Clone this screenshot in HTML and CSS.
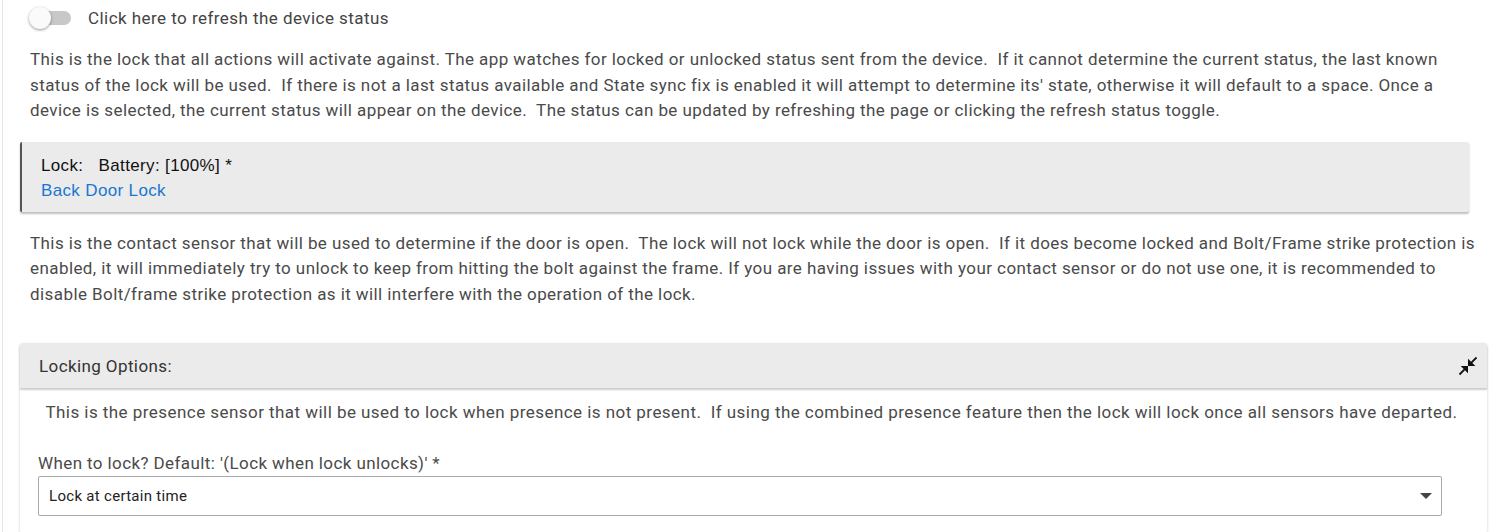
FILE: index.html
```html
<!DOCTYPE html>
<html lang="en">
<head>
    <meta charset="UTF-8">
    <title>Lock Settings</title>
    <link rel="stylesheet" href="styles.css">
</head>
<body>
    <div class="page">
        <!-- refresh toggle -->
        <label class="toggle-row">
            <span class="toggle"><span class="knob"></span></span>
            <span class="toggle-text">Click here to refresh the device status</span>
        </label>

        <p class="desc">This is the lock that all actions will activate against. The app watches for locked or unlocked status sent from the device.&nbsp; If it cannot determine the current status, the last known status of the lock will be used.&nbsp; If there is not a last status available and State sync fix is enabled it will attempt to determine its' state, otherwise it will default to a space. Once a device is selected, the current status will appear on the device.&nbsp; The status can be updated by refreshing the page or clicking the refresh status toggle.</p>

        <div class="device-box">
            <div class="device-label">Lock:&nbsp;&nbsp; Battery: [100%] *</div>
            <a class="device-link" href="#">Back Door Lock</a>
        </div>

        <p class="desc">This is the contact sensor that will be used to determine if the door is open.&nbsp; The lock will not lock while the door is open.&nbsp; If it does become locked and Bolt/Frame strike protection is enabled, it will immediately try to unlock to keep from hitting the bolt against the frame. If you are having issues with your contact sensor or do not use one, it is recommended to disable Bolt/frame strike protection as it will interfere with the operation of the lock.</p>

        <!-- Locking Options -->
        <div class="panel">
            <div class="panel-head">
                <span>Locking Options:</span>
                <svg class="collapse" width="22" height="22" viewBox="0 0 24 24">
                    <path d="M22 3.41L16.71 8.7 20 12h-8V4l3.29 3.29L20.59 2 22 3.41zM3.41 22l5.29-5.29L12 20v-8H4l3.29 3.29L2 20.59 3.41 22z" fill="#111"/>
                </svg>
            </div>
            <div class="panel-body">
                <p class="center-note">This is the presence sensor that will be used to lock when presence is not present.&nbsp; If using the combined presence feature then the lock will lock once all sensors have departed.</p>
                <div class="field-label">When to lock? Default: '(Lock when lock unlocks)' *</div>
                <div class="select">
                    <span>Lock at certain time</span>
                    <span class="caret"></span>
                </div>
            </div>
        </div>
    </div>
</body>
</html>
```

FILE: styles.css
```css
body {
    margin: 0;
    font-family: Roboto, "Liberation Sans", sans-serif;
    color: #4a4a4a;
    background: #fff;
}
.page {
    margin-left: 2px;
    border-left: 1px solid #e4e4e4;
    padding: 0 18px 20px 17px;
    min-height: 532px;
    box-sizing: border-box;
}
.toggle-row {
    display: flex;
    align-items: center;
    height: 36px;
    padding-left: 11px;
    cursor: pointer;
}
.toggle {
    position: relative;
    width: 40px;
    height: 14px;
    border-radius: 7px;
    background: #c8c8c8;
}
.knob {
    position: absolute;
    left: -2px;
    top: -4px;
    width: 22px;
    height: 22px;
    border-radius: 50%;
    background: #fafafa;
    box-shadow: 0 1px 3px rgba(0, 0, 0, 0.4);
}
.toggle-text {
    margin-left: 17px;
    font-size: 17px;
    letter-spacing: 0.45px;
    color: #444;
}
.desc {
    margin: 11px 0 0;
    padding: 0 0 0 10px;
    font-size: 17px;
    letter-spacing: 0.42px;
    line-height: 25.5px;
}
.device-box {
    margin: 18px 18px 0 0;
    background: #ebebeb;
    border-left: 2px solid #555;
    border-radius: 2px;
    box-shadow: 0 2px 2px rgba(0, 0, 0, 0.25);
    padding: 11px 19px 10px;
    font-family: "Liberation Sans", Arial, sans-serif;
    font-size: 17px;
    letter-spacing: 0.35px;
    line-height: 25px;
    height: 70px;
    box-sizing: border-box;
}
.device-label {
    color: #111;
}
.device-link {
    color: #1976d2;
    text-decoration: none;
}
.device-box + .desc {
    margin-top: 19px;
}
.panel {
    margin-top: 36px;
    border-radius: 3px;
    box-shadow: 0 1px 3px rgba(0, 0, 0, 0.2);
}
.panel-head {
    display: flex;
    align-items: center;
    justify-content: space-between;
    height: 45px;
    padding: 0 8px 0 19px;
    background: #ebebeb;
    border-radius: 3px 3px 0 0;
    box-shadow: 0 2px 2px rgba(0, 0, 0, 0.2);
    font-size: 17px;
    letter-spacing: 0.4px;
    color: #333;
    position: relative;
}
.panel-body {
    padding: 13px 45px 17px 18px;
}
.center-note {
    margin: 0 -23px 0 0;
    text-align: center;
    font-size: 17px;
    letter-spacing: 0.45px;
    line-height: 22px;
}
.field-label {
    margin-top: 29px;
    font-size: 17px;
    letter-spacing: 0.4px;
    line-height: 22px;
}
.select {
    display: flex;
    align-items: center;
    justify-content: space-between;
    height: 40px;
    margin-top: 2px;
    border: 1px solid #aaa;
    border-radius: 2px;
    padding: 0 9px 0 10px;
    font-size: 15px;
    letter-spacing: 0.3px;
    color: #222;
    box-sizing: border-box;
}
.caret {
    width: 0;
    height: 0;
    border-left: 6px solid transparent;
    border-right: 6px solid transparent;
    border-top: 6px solid #444;
}
```
